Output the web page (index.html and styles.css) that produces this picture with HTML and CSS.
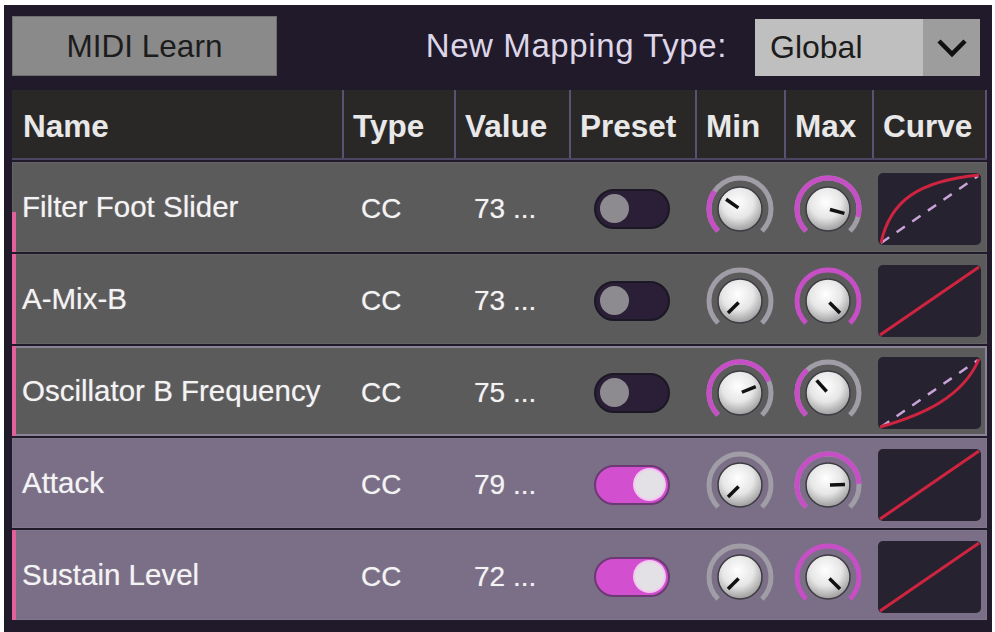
FILE: index.html
```html
<!DOCTYPE html>
<html>
<head lang="en">
    <title>MIDI Mappings</title>
    <link rel="stylesheet" href="styles.css">
</head>
<body>
    <div class="app">
        <div class="topbar">
            <button class="learn">MIDI Learn</button>
            <div class="mapping">
                <span class="label">New Mapping Type:</span>
                <div class="select">
                    <span class="select-value">Global</span>
                    <span class="select-arrow">
                        <svg width="32" height="22" viewBox="0 0 32 22"><path d="M3 4 L16 17 L29 4" fill="none" stroke="#111" stroke-width="4.5"/></svg>
                    </span>
                </div>
            </div>
        </div>

        <div class="table">
            <div class="head">
                <div class="cell">Name</div>
                <div class="cell">Type</div>
                <div class="cell">Value</div>
                <div class="cell">Preset</div>
                <div class="cell">Min</div>
                <div class="cell">Max</div>
                <div class="cell">Curve</div>
            </div>

            <!-- row 1 -->
            <div class="row gray">
                <div class="cell name"><span class="activity" style="height: 45%"></span>Filter Foot Slider</div>
                <div class="cell type">CC</div>
                <div class="cell value">73 ...</div>
                <div class="cell center"><span class="toggle"><span class="thumb"></span></span></div>
                <div class="cell center">
                    <svg class="knob" width="72" height="72" viewBox="0 0 72 72">
                        <path class="track" d="M14.08 57.92 A31 31 0 1 1 57.92 57.92"/>
                        <path class="fill" d="M14.08 57.92 A31 31 0 0 1 10.61 18.22"/>
                        <circle class="body" cx="36" cy="36" r="22"/>
                        <line class="pointer" x1="34.36" y1="34.85" x2="22.07" y2="26.25"/>
                    </svg>
                </div>
                <div class="cell center">
                    <svg class="knob" width="72" height="72" viewBox="0 0 72 72">
                        <path class="track" d="M14.08 57.92 A31 31 0 1 1 57.92 57.92"/>
                        <path class="fill" d="M14.08 57.92 A31 31 0 1 1 65.94 44.02"/>
                        <circle class="body" cx="36" cy="36" r="22"/>
                        <line class="pointer" x1="37.93" y1="36.52" x2="52.42" y2="40.40"/>
                    </svg>
                </div>
                <div class="cell center">
                    <svg class="curve" width="103" height="72" viewBox="0 0 103 72">
                        <path class="dash" d="M3 70 L100 3"/>
                        <path class="line" d="M3 70 C12 28, 40 8, 101 2"/>
                    </svg>
                </div>
            </div>

            <!-- row 2 -->
            <div class="row gray">
                <div class="cell name"><span class="activity" style="height: 100%"></span>A-Mix-B</div>
                <div class="cell type">CC</div>
                <div class="cell value">73 ...</div>
                <div class="cell center"><span class="toggle"><span class="thumb"></span></span></div>
                <div class="cell center">
                    <svg class="knob" width="72" height="72" viewBox="0 0 72 72">
                        <path class="track" d="M14.08 57.92 A31 31 0 1 1 57.92 57.92"/>
                        <circle class="body" cx="36" cy="36" r="22"/>
                        <line class="pointer" x1="34.59" y1="37.41" x2="23.98" y2="48.02"/>
                    </svg>
                </div>
                <div class="cell center">
                    <svg class="knob" width="72" height="72" viewBox="0 0 72 72">
                        <path class="fill" d="M14.08 57.92 A31 31 0 1 1 57.92 57.92"/>
                        <circle class="body" cx="36" cy="36" r="22"/>
                        <line class="pointer" x1="37.41" y1="37.41" x2="48.02" y2="48.02"/>
                    </svg>
                </div>
                <div class="cell center">
                    <svg class="curve" width="103" height="72" viewBox="0 0 103 72">
                        <path class="line" d="M2 70 L101 2"/>
                    </svg>
                </div>
            </div>

            <!-- row 3 -->
            <div class="row gray selected">
                <div class="cell name"><span class="activity" style="height: 100%"></span>Oscillator B Frequency</div>
                <div class="cell type">CC</div>
                <div class="cell value">75 ...</div>
                <div class="cell center"><span class="toggle"><span class="thumb"></span></span></div>
                <div class="cell center">
                    <svg class="knob" width="72" height="72" viewBox="0 0 72 72">
                        <path class="track" d="M14.08 57.92 A31 31 0 1 1 57.92 57.92"/>
                        <path class="fill" d="M14.08 57.92 A31 31 0 1 1 64.74 24.39"/>
                        <circle class="body" cx="36" cy="36" r="22"/>
                        <line class="pointer" x1="37.85" y1="35.25" x2="51.76" y2="29.63"/>
                    </svg>
                </div>
                <div class="cell center">
                    <svg class="knob" width="72" height="72" viewBox="0 0 72 72">
                        <path class="track" d="M14.08 57.92 A31 31 0 1 1 57.92 57.92"/>
                        <path class="fill" d="M14.08 57.92 A31 31 0 0 1 15.26 12.96"/>
                        <circle class="body" cx="36" cy="36" r="22"/>
                        <line class="pointer" x1="34.66" y1="34.51" x2="24.63" y2="23.37"/>
                    </svg>
                </div>
                <div class="cell center">
                    <svg class="curve" width="103" height="72" viewBox="0 0 103 72">
                        <path class="dash" d="M3 70 L100 3"/>
                        <path class="line" d="M2 70 C45 58, 85 40, 101 2"/>
                    </svg>
                </div>
            </div>

            <!-- row 4 -->
            <div class="row purple">
                <div class="cell name"><span class="activity" style="height: 0"></span>Attack</div>
                <div class="cell type">CC</div>
                <div class="cell value">79 ...</div>
                <div class="cell center"><span class="toggle on"><span class="thumb"></span></span></div>
                <div class="cell center">
                    <svg class="knob" width="72" height="72" viewBox="0 0 72 72">
                        <path class="track" d="M14.08 57.92 A31 31 0 1 1 57.92 57.92"/>
                        <circle class="body" cx="36" cy="36" r="22"/>
                        <line class="pointer" x1="34.59" y1="37.41" x2="23.98" y2="48.02"/>
                    </svg>
                </div>
                <div class="cell center">
                    <svg class="knob" width="72" height="72" viewBox="0 0 72 72">
                        <path class="track" d="M14.08 57.92 A31 31 0 1 1 57.92 57.92"/>
                        <path class="fill" d="M14.08 57.92 A31 31 0 1 1 66.98 34.92"/>
                        <circle class="body" cx="36" cy="36" r="22"/>
                        <line class="pointer" x1="38" y1="35.93" x2="52.99" y2="35.41"/>
                    </svg>
                </div>
                <div class="cell center">
                    <svg class="curve" width="103" height="72" viewBox="0 0 103 72">
                        <path class="line" d="M2 70 L101 2"/>
                    </svg>
                </div>
            </div>

            <!-- row 5 -->
            <div class="row purple">
                <div class="cell name"><span class="activity" style="height: 100%"></span>Sustain Level</div>
                <div class="cell type">CC</div>
                <div class="cell value">72 ...</div>
                <div class="cell center"><span class="toggle on"><span class="thumb"></span></span></div>
                <div class="cell center">
                    <svg class="knob" width="72" height="72" viewBox="0 0 72 72">
                        <path class="track" d="M14.08 57.92 A31 31 0 1 1 57.92 57.92"/>
                        <circle class="body" cx="36" cy="36" r="22"/>
                        <line class="pointer" x1="34.59" y1="37.41" x2="23.98" y2="48.02"/>
                    </svg>
                </div>
                <div class="cell center">
                    <svg class="knob" width="72" height="72" viewBox="0 0 72 72">
                        <path class="fill" d="M14.08 57.92 A31 31 0 1 1 57.92 57.92"/>
                        <circle class="body" cx="36" cy="36" r="22"/>
                        <line class="pointer" x1="37.41" y1="37.41" x2="48.02" y2="48.02"/>
                    </svg>
                </div>
                <div class="cell center">
                    <svg class="curve" width="103" height="72" viewBox="0 0 103 72">
                        <path class="line" d="M2 70 L101 2"/>
                    </svg>
                </div>
            </div>
        </div>
    </div>

    <!-- shared gradient for the knob caps -->
    <svg width="0" height="0" class="defs">
        <defs>
            <radialGradient id="cap" cx="45%" cy="35%" r="65%">
                <stop offset="0" stop-color="#ffffff"/>
                <stop offset="0.55" stop-color="#e6e6e6"/>
                <stop offset="1" stop-color="#9d9d9d"/>
            </radialGradient>
        </defs>
    </svg>
</body>
</html>
```

FILE: styles.css
```css
body {
    margin: 0;
    background: #ffffff;
    font-family: "Liberation Sans", Arial, sans-serif;
}

.app {
    margin: 5px 3px 0 4px;
    height: 627px;
    padding: 11px 5px 0 8px;
    box-sizing: border-box;
    background: #211a2b;
}

.topbar {
    display: flex;
    justify-content: space-between;
    align-items: center;
    height: 60px;
    margin-bottom: 14px;
}

.learn {
    width: 265px;
    height: 60px;
    background: #8a8a8a;
    border: 1px solid #6f6f6f;
    color: #1c1c1c;
    font-family: inherit;
    font-size: 31.5px;
    padding: 0;
}

.mapping {
    display: flex;
    align-items: center;
    gap: 28px;
    margin-right: 7px;
}

.label {
    color: #ddd6e8;
    font-size: 33px;
    letter-spacing: 0.6px;
}

.select {
    display: flex;
    width: 225px;
    height: 57px;
    margin-top: 3px;
    background: #bfbfbf;
}

.select-value {
    flex: 1;
    display: flex;
    align-items: center;
    padding-left: 15px;
    font-size: 32px;
    color: #1c1c1c;
}

.select-arrow {
    width: 57px;
    display: flex;
    align-items: center;
    justify-content: center;
    background: #9d9d9d;
}

.table {
    display: flex;
    flex-direction: column;
    gap: 2px;
}

.head, .row {
    display: grid;
    grid-template-columns: 330px 112px 115px 126px 89px 88px 115px;
}

.head {
    height: 70px;
    background: #2a2727;
    border-bottom: 2px solid #4d4562;
    box-sizing: border-box;
}

.head .cell {
    display: flex;
    align-items: center;
    padding: 5px 0 0 9px;
    font-size: 31.5px;
    font-weight: bold;
    color: #e8e8e8;
}

.head .cell:first-child {
    padding-left: 11px;
}

.head .cell + .cell {
    border-left: 2px solid #5a5272;
}

.head .cell:last-child {
    border-right: 2px solid #5a5272;
}

.row {
    height: 90px;
    box-shadow: inset 0 0 0 1px rgba(255, 255, 255, 0.06);
}

.row.gray {
    background: #5c5b5c;
}

.row.purple {
    background: #7a6f86;
}

.row.selected {
    box-shadow: inset 0 0 0 2px #8a8496;
}

.row .cell {
    display: flex;
    align-items: center;
    padding-top: 3px;
    font-size: 28px;
    color: #f3f3f3;
    text-shadow: 0 0 1px rgba(255, 255, 255, 0.5);
}

.row .name {
    gap: 6px;
    padding-top: 0;
    font-size: 29.5px;
}

.activity {
    align-self: flex-end;
    width: 4px;
    background: #e2619d;
}

.row .type {
    padding-left: 19px;
}

.row .value {
    padding-left: 20px;
}

.row .center {
    justify-content: center;
}

/* preset switch */
.toggle {
    display: flex;
    align-items: center;
    width: 76px;
    height: 40px;
    padding: 0 4px;
    box-sizing: border-box;
    border-radius: 20px;
    background: #2a1f37;
    border: 2px solid #1c1724;
}

.toggle .thumb {
    width: 29px;
    height: 29px;
    border-radius: 50%;
    background: #8d8b90;
}

.toggle.on {
    justify-content: flex-end;
    background: #d24fd0;
    border-color: #6b3a72;
}

.toggle.on .thumb {
    background: #e4e1e6;
    box-shadow: 0 0 0 2px #f2c8f0;
}

/* knobs */
.knob path {
    fill: none;
    stroke-width: 5;
}

.knob .track {
    stroke: #a19da7;
}

.knob .fill {
    stroke: #c74fc5;
}

.knob .body {
    fill: url(#cap);
    stroke: #3e3b42;
    stroke-width: 1.5;
}

.knob .pointer {
    stroke: #111111;
    stroke-width: 3.5;
}

/* response curves */
.curve {
    background: #27222f;
    border-radius: 5px;
}

.curve path {
    fill: none;
}

.curve .line {
    stroke: #cf2440;
    stroke-width: 3;
}

.curve .dash {
    stroke: #c9a4d8;
    stroke-width: 2.5;
    stroke-dasharray: 10 9;
}

.defs {
    position: absolute;
}
```
